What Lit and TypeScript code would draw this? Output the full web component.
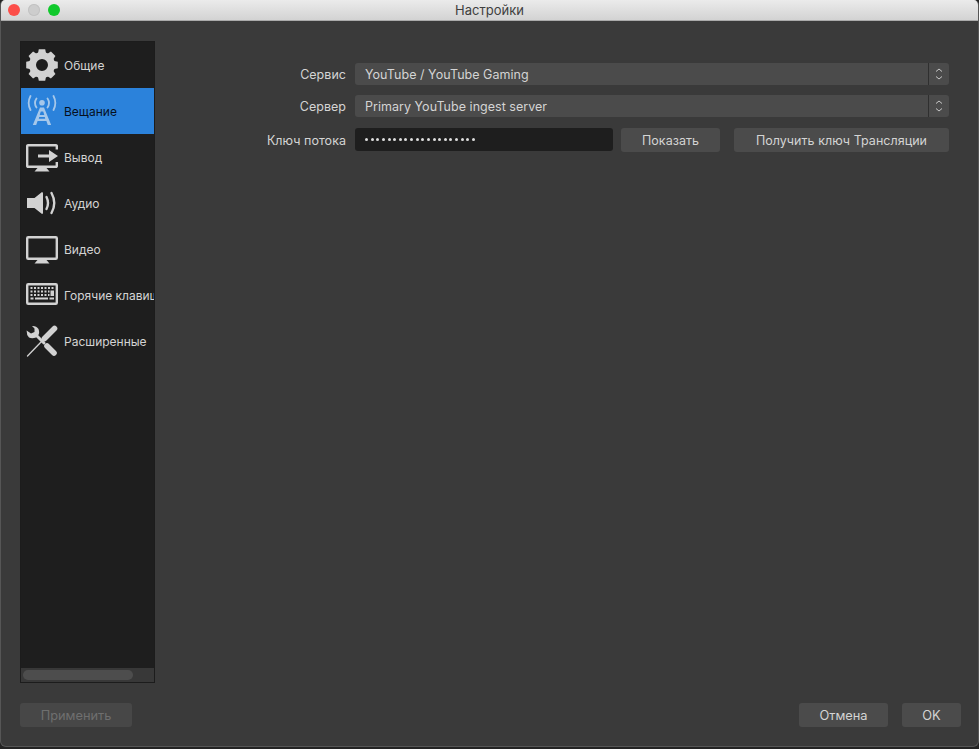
import { LitElement, html, css, svg } from 'lit';
import { customElement } from 'lit/decorators.js';

const gearTeeth = [0, 45, 90, 135, 180, 225, 270, 315];

const icons = {
  general: svg`
    <circle cx="16" cy="16" r="9.5" fill="none" stroke="currentColor" stroke-width="7"/>
    ${gearTeeth.map(
      (a) => svg`<path d="M12.8 0.2 H19.2 L20.4 6 H11.6 Z" fill="currentColor" transform="rotate(${a} 16 16)"/>`
    )}`,
  stream: svg`
    <circle cx="16" cy="7.8" r="2.800" fill="currentColor"/>
    <g fill="none" stroke="currentColor" stroke-linecap="round" stroke-width="1.800">
      <path d="M10.500 3.500 A8 8 0 0 0 10.500 12.500"/>
      <path d="M21.500 3.500 A8 8 0 0 1 21.500 12.500"/>
      <path d="M4.500 1 A15 15 0 0 0 4.500 15"/>
      <path d="M27.500 1 A15 15 0 0 1 27.500 15"/>
    </g>
    <path d="M14 12.500 H18 L25.200 30 H21.800 L20.400 26 H11.600 L10.200 30 H6.800 Z M13.700 20 H18.300 L17.200 16.500 H14.800 Z M12.800 23.800 H19.200 L18.800 22 H13.200 Z" fill="currentColor" fill-rule="evenodd"/>`,
  output: svg`
    <path d="M30.800 8.500 V5.500 A1 1 0 0 0 29.800 4.200 H2.200 A1 1 0 0 0 1.200 5.500 V24.500 A1 1 0 0 0 2.200 25.800 H29.800 A1 1 0 0 0 30.800 24.500 V21" fill="none" stroke="currentColor" stroke-width="2.400"/>
    <path d="M11.500 27 H20.500 L23.500 30.500 H8.500 Z" fill="currentColor"/>
    <path d="M12 13.500 H23 V9 L32 15 L23 21 V16.500 H12 Z" fill="currentColor"/>`,
  audio: svg`
    <path d="M1 11 H8.500 L16 5 Q17 5 17 6.500 V25.500 Q17 27 16 27 L8.500 21 H1 Z" fill="currentColor"/>
    <g fill="none" stroke="currentColor" stroke-width="2.400" stroke-linecap="round">
      <path d="M20.500 10 Q23.500 16 20.500 22"/>
      <path d="M25.500 6 Q31 16 25.500 26"/>
    </g>`,
  video: svg`
    <rect x="1.200" y="4.200" width="29.600" height="21.600" rx="1" fill="none" stroke="currentColor" stroke-width="2.400"/>
    <path d="M11.500 27 H20.500 L23.500 30.500 H8.500 Z" fill="currentColor"/>`,
  hotkeys: svg`
    <rect x="1.200" y="5.200" width="29.600" height="19.600" rx="1" fill="none" stroke="currentColor" stroke-width="2.400"/>
    <g fill="currentColor">
      <path d="M4.500 8 h2v2h-2z M8 8 h2v2h-2z M11.500 8 h2v2h-2z M15 8 h2v2h-2z M18.500 8 h2v2h-2z M22 8 h2v2h-2z M25.500 8 h2v2h-2z"/>
      <path d="M4.500 11.500 h2v2h-2z M8 11.500 h2v2h-2z M11.500 11.500 h2v2h-2z M15 11.500 h2v2h-2z M18.500 11.500 h2v2h-2z M22 11.500 h1.500v2h-1.500z"/>
      <path d="M4.500 15 h2v2h-2z M8 15 h2v2h-2z M11.500 15 h2v2h-2z M15 15 h2v2h-2z M18.500 15 h2v2h-2z M22 15 h1.500v2h-1.500z"/>
      <path d="M24.500 11.500 h3.500v5.500h-3.500z M4.500 18.500 h3v2h-3z M9 18.500 h13v2h-13z M23.500 18.500 h4.500v2h-4.500z"/>
    </g>`,
  advanced: svg`
    <g fill="none" stroke="currentColor" stroke-linecap="round">
      <path d="M28.500 3.500 L18.500 13.500" stroke-width="5.600"/>
      <path d="M17 15 L1.500 31" stroke-width="1.300"/>
      <path d="M21 21 L28 28" stroke-width="5.600"/>
      <path d="M10 10 L18 18" stroke-width="3"/>
    </g>
    <path d="M6 1 A7 7 0 0 1 12.500 4 Q14 8 12 10.500 L10 12.500 Q6 14 3 12.500 Q0.500 10 0.600 5.500 L5 8.500 L8.500 7 L8.500 3.500 Z" fill="currentColor"/>`,
};

const categories = [
  { label: 'Общие', icon: icons.general },
  { label: 'Вещание', icon: icons.stream, selected: true },
  { label: 'Вывод', icon: icons.output },
  { label: 'Аудио', icon: icons.audio },
  { label: 'Видео', icon: icons.video },
  { label: 'Горячие клавиши', icon: icons.hotkeys },
  { label: 'Расширенные', icon: icons.advanced },
];

@customElement('app-root')
export class AppRoot extends LitElement {
  static styles = css`
    :host {
      display: block;
      width: 979px;
      height: 749px;
      overflow: hidden;
      background: #232323;
      font-family: Inter, 'Noto Sans', sans-serif;
      font-size: 12px;
      color: #d4d4d4;
    }

    .window {
      height: 747px;
      display: flex;
      flex-direction: column;
      box-sizing: border-box;
      background: #3a3a3a;
      border-radius: 5px 5px 6px 6px;
      border: 1px solid #565656;
      border-top: none;
      overflow: hidden;
    }

    .titlebar {
      flex: none;
      height: 21px;
      margin: 0 -1px;
      display: flex;
      align-items: center;
      justify-content: center;
      position: relative;
      background: linear-gradient(#ebebeb, #d3d3d3);
      border-bottom: 1px solid #aaaaaa;
      box-sizing: border-box;
      color: #3f3f3f;
      font-size: 13px;
    }

    .lights {
      position: absolute;
      left: 8px;
      top: 4px;
      display: flex;
      gap: 8px;
    }

    .lights span {
      width: 12px;
      height: 12px;
      border-radius: 50%;
    }

    .red { background: #fc4e49; }
    .grey { background: #cdcdcd; box-shadow: inset 0 0 0 1px #c2c2c2; }
    .green { background: #10c92c; }

    .body {
      flex: 1;
      display: flex;
      flex-direction: column;
      padding: 20px 17px 19px 19px;
      min-height: 0;
    }

    .main {
      flex: 1;
      display: flex;
      min-height: 0;
    }

    .sidebar {
      flex: none;
      width: 135px;
      box-sizing: border-box;
      display: flex;
      flex-direction: column;
      border: 1px solid #1c1c1c;
      background: #1e1e1e;
    }

    .list {
      flex: 1;
      overflow: hidden;
    }

    .row {
      height: 46px;
      display: flex;
      align-items: center;
      gap: 6px;
      padding-left: 5px;
      white-space: nowrap;
      overflow: hidden;
    }

    .row svg {
      flex: none;
      width: 32px;
      height: 32px;
      color: #d2d2d2;
    }

    .row.selected {
      background: #2b82db;
      color: #06101e;
    }

    .row.selected svg {
      color: #a5c7ea;
    }

    .hscroll {
      flex: none;
      height: 14px;
      padding: 2px;
      box-sizing: border-box;
      background: #383838;
    }

    .thumb {
      width: 110px;
      height: 10px;
      border-radius: 5px;
      background: #4d4d4d;
    }

    .form {
      flex: 1;
      display: grid;
      grid-template-columns: 191px 1fr;
      column-gap: 9px;
      row-gap: 10px;
      align-content: start;
      padding: 22px 12px 0 0;
      font-size: 12.5px;
      letter-spacing: 0.03px;
    }

    .label {
      display: flex;
      align-items: center;
      justify-content: flex-end;
      height: 22px;
    }

    .label.key {
      height: 24px;
      margin-top: 1px;
    }

    .select {
      height: 22px;
      display: flex;
      align-items: center;
      background: #4b4b4b;
      border-radius: 3px;
      padding-left: 10px;
    }

    .select .value {
      flex: 1;
    }

    .stepper {
      flex: none;
      width: 20px;
      height: 100%;
      border-left: 1px solid #2f2f2f;
      display: flex;
      align-items: center;
      justify-content: center;
    }

    .stepper svg {
      width: 10px;
      height: 14px;
    }

    .key-row {
      display: flex;
      align-items: flex-start;
      height: 24px;
      margin-top: 1px;
    }

    .input {
      flex: none;
      width: 258px;
      height: 23px;
      box-sizing: border-box;
      background: #1e1e1e;
      border-radius: 3px;
      padding-left: 10px;
      display: flex;
      align-items: center;
      gap: 2.63px;
    }

    .input i {
      flex: none;
      width: 3px;
      height: 3px;
      border-radius: 50%;
      background: #dedede;
    }

    button {
      font: inherit;
      letter-spacing: inherit;
      color: #d4d4d4;
      background: #4b4b4b;
      border: none;
      border-radius: 3px;
      padding: 0;
      height: 24px;
    }

    button:disabled {
      color: #6f6f6f;
      background: #474747;
    }

    .show {
      width: 99px;
      margin: 0 14px 0 8px;
    }

    .get-key {
      width: 215px;
    }

    .footer {
      flex: none;
      display: flex;
      align-items: center;
      margin-top: 20px;
      font-size: 12.8px;
    }

    .apply { width: 112px; }
    .cancel { width: 89px; margin-left: auto; margin-right: 14px; }
    .ok { width: 59px; }
  `;

  render() {
    return html`
      <div class="window">
        <div class="titlebar">
          <div class="lights">
            <span class="red"></span><span class="grey"></span><span class="green"></span>
          </div>
          Настройки
        </div>
        <div class="body">
          <div class="main">
            <div class="sidebar">
              <div class="list">
                ${categories.map(
                  (c) => html`
                    <div class="row ${c.selected ? 'selected' : ''}">
                      <svg viewBox="0 0 32 32">${c.icon}</svg>
                      <span>${c.label}</span>
                    </div>
                  `
                )}
              </div>
              <div class="hscroll"><div class="thumb"></div></div>
            </div>
            <div class="form">
              <div class="label">Сервис</div>
              ${this.renderSelect('YouTube / YouTube Gaming')}
              <div class="label">Сервер</div>
              ${this.renderSelect('Primary YouTube ingest server')}
              <div class="label key">Ключ потока</div>
              <div class="key-row">
                <div class="input">${Array.from({ length: 20 }, () => html`<i></i>`)}</div>
                <button class="show">Показать</button>
                <button class="get-key">Получить ключ Трансляции</button>
              </div>
            </div>
          </div>
          <div class="footer">
            <button class="apply" disabled>Применить</button>
            <button class="cancel">Отмена</button>
            <button class="ok">OK</button>
          </div>
        </div>
      </div>
    `;
  }

  renderSelect(value: string) {
    return html`
      <div class="select">
        <span class="value">${value}</span>
        <div class="stepper">
          <svg viewBox="0 0 10 14" fill="none" stroke="#c8c8c8" stroke-width="1">
            <path d="M2 4.500 L5 2 L8 4.500"/>
            <path d="M2 9.500 L5 12 L8 9.500"/>
          </svg>
        </div>
      </div>
    `;
  }
}
